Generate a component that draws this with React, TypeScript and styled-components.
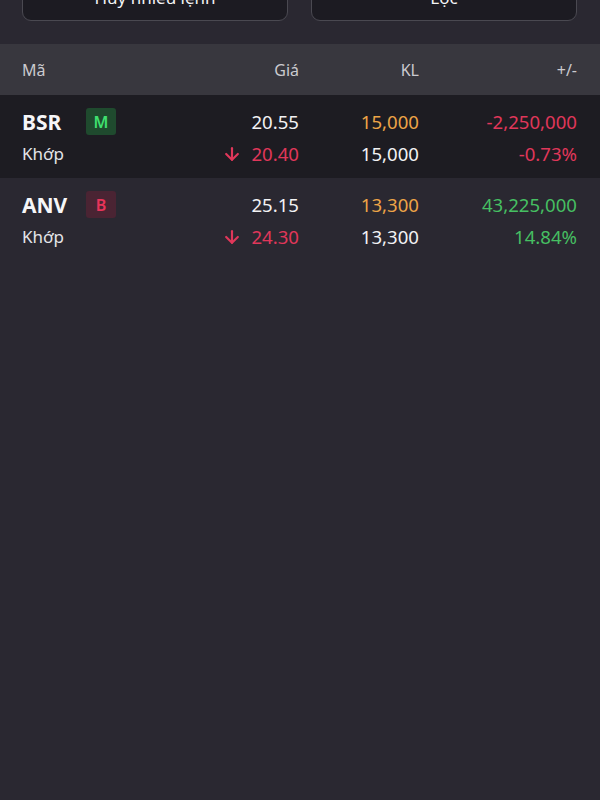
import * as React from 'react'
import styled, { createGlobalStyle } from 'styled-components'
import { ArrowDown } from 'lucide-react'

const GlobalStyle = createGlobalStyle`
  html, body {
    margin: 0;
    padding: 0;
    background: #2a2831;
  }
  body {
    font-family: 'Noto Sans', 'Open Sans', sans-serif;
    color: #f2f2f4;
  }
`

interface IOrder {
  symbol: string
  side: 'M' | 'B'
  price: string
  matchPrice: string
  volume: string
  matchVolume: string
  value: string
  percent: string
  up: boolean
}

const orders: IOrder[] = [
  {
    symbol: 'BSR',
    side: 'M',
    price: '20.55',
    matchPrice: '20.40',
    volume: '15,000',
    matchVolume: '15,000',
    value: '-2,250,000',
    percent: '-0.73%',
    up: false
  },
  {
    symbol: 'ANV',
    side: 'B',
    price: '25.15',
    matchPrice: '24.30',
    volume: '13,300',
    matchVolume: '13,300',
    value: '43,225,000',
    percent: '14.84%',
    up: true
  }
]

const Page = styled.div`
  width: 600px;
  min-height: 800px;
  background: #2a2831;
`

const Toolbar = styled.div`
  height: 44px;
  display: flex;
  align-items: flex-end;
  gap: 23px;
  padding: 0 23px 23px 22px;
  box-sizing: border-box;
  overflow: hidden;
`

const ToolButton = styled.button`
  flex: 1;
  height: 48px;
  flex-shrink: 0;
  border: 1.5px solid #4a4951;
  border-radius: 9px;
  background: #1c1b22;
  color: #f4f4f6;
  font-family: 'Noto Sans', sans-serif;
  font-size: 17px;
`

const Grid = styled.div`
  display: grid;
  grid-template-columns: 64px 1fr 120px 158px;
  align-items: center;
  padding: 0 23px 0 22px;
`

const Header = styled(Grid)`
  height: 51px;
  background: #38373e;
  color: #cbcacf;
  font-size: 16px;
`

const HeadCell = styled.div<{ $right?: boolean }>`
  text-align: ${({ $right }) => ($right ? 'right' : 'left')};
`

const Row = styled(Grid)<{ $dark: boolean }>`
  height: 83px;
  box-sizing: border-box;
  padding-top: 2px;
  grid-template-rows: 32px 32px;
  align-content: center;
  background: ${({ $dark }) => ($dark ? '#1d1c22' : 'transparent')};
`

const Symbol = styled.div`
  font-size: 21px;
  font-weight: 700;
  color: #f6f6f8;
`

const Badge = styled.span<{ $buy: boolean }>`
  margin-right: auto;
  width: 30px;
  height: 27px;
  border-radius: 3px;
  display: flex;
  align-items: center;
  justify-content: center;
  font-size: 16px;
  font-weight: 600;
  background: ${({ $buy }) => ($buy ? '#4a2433' : '#1f4a2e')};
  color: ${({ $buy }) => ($buy ? '#e8345a' : '#3fe070')};
`

const Sub = styled.div`
  font-size: 17px;
  color: #e4e4e8;
`

const Num = styled.div<{ $colour?: string }>`
  font-size: 18.6px;
  color: ${({ $colour }) => $colour || '#f2f2f4'};
  display: flex;
  justify-content: flex-end;
  align-items: center;
  gap: 9px;
`

const PriceCell = styled(Num)`
  grid-column: 2;
`

const red = '#e0375a'
const green = '#46bf62'
const orange = '#eda447'

function OrderRow({ order, dark }: { order: IOrder; dark: boolean }) {
  const changeColour = order.up ? green : red
  return (
    <Row $dark={dark}>
      <Symbol>{order.symbol}</Symbol>
      <PriceCell>
        <Badge $buy={order.side === 'B'}>{order.side}</Badge>
        {order.price}
      </PriceCell>
      <Num $colour={orange}>{order.volume}</Num>
      <Num $colour={changeColour}>{order.value}</Num>
      <Sub>Khớp</Sub>
      <PriceCell $colour={red}>
        <ArrowDown size={20} strokeWidth={2.6} />
        {order.matchPrice}
      </PriceCell>
      <Num>{order.matchVolume}</Num>
      <Num $colour={changeColour}>{order.percent}</Num>
    </Row>
  )
}

export default function App() {
  return (
    <Page>
      <GlobalStyle />
      <Toolbar>
        <ToolButton>Hủy nhiều lệnh</ToolButton>
        <ToolButton>Lọc</ToolButton>
      </Toolbar>
      <Header>
        <HeadCell>Mã</HeadCell>
        <HeadCell $right>Giá</HeadCell>
        <HeadCell $right>KL</HeadCell>
        <HeadCell $right>+/-</HeadCell>
      </Header>
      {orders.map((order, i) => (
        <OrderRow key={order.symbol} order={order} dark={i === 0} />
      ))}
    </Page>
  )
}
